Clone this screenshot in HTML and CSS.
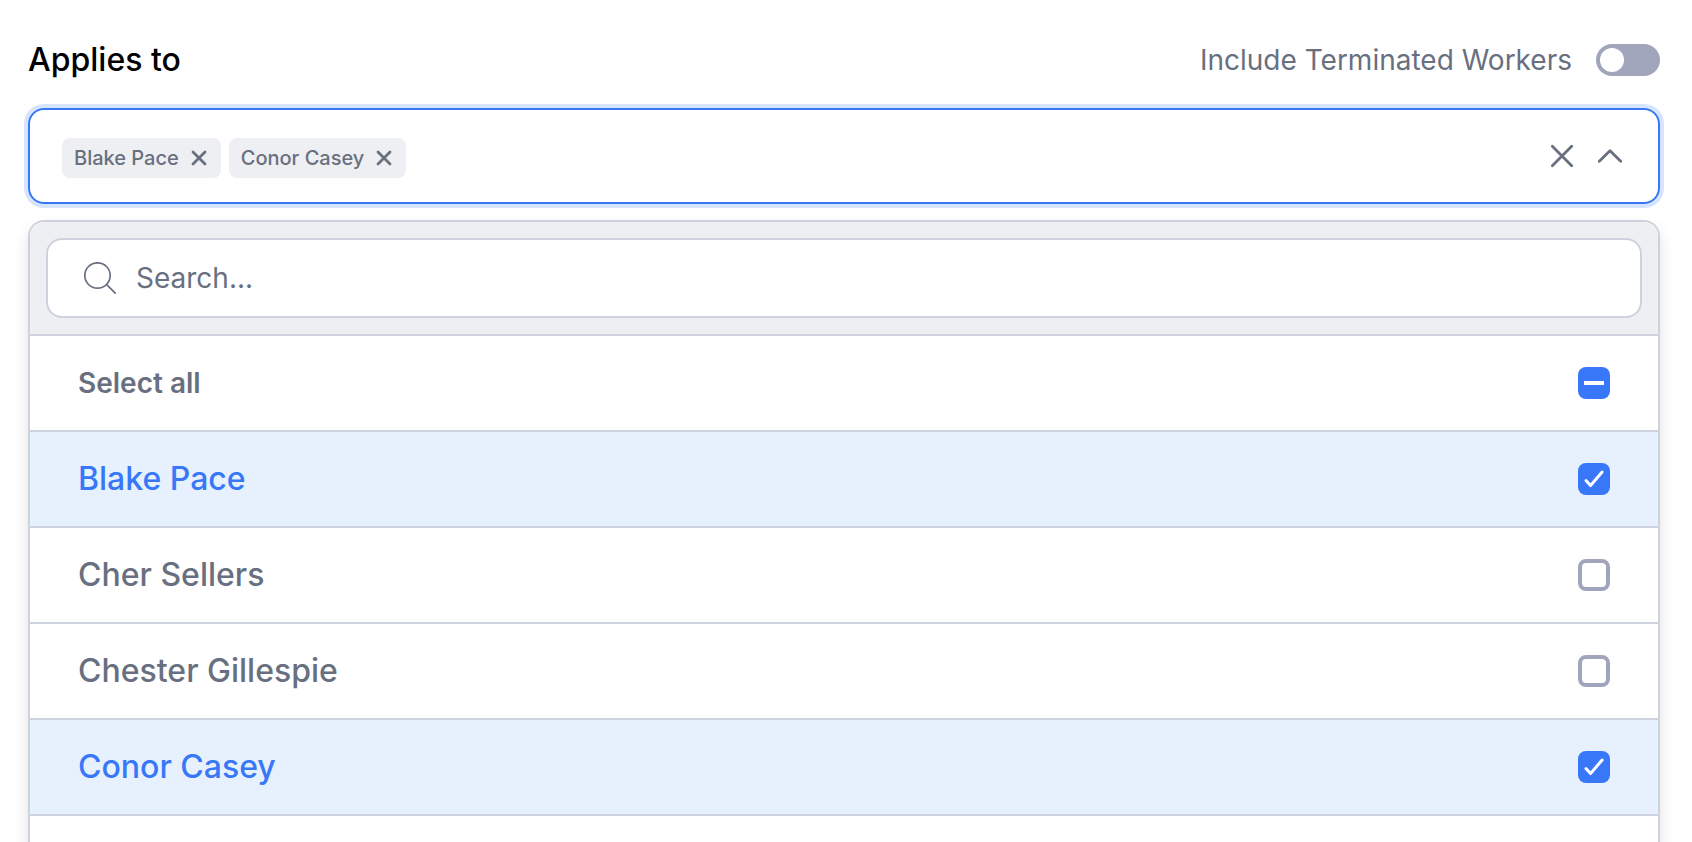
FILE: index.html
```html
<!DOCTYPE html>
<html lang="en">
  <head>
    <meta charset="UTF-8" />
    <meta name="viewport" content="width=device-width, initial-scale=1" />
    <title>Applies to</title>
    <link rel="stylesheet" href="styles.css">
  </head>
  <body>
    <main class="picker">
      <div class="picker-head">
        <h1 class="picker-title">Applies to</h1>
        <label class="toggle">
          Include Terminated Workers
          <input type="checkbox" role="switch" class="toggle-input" />
        </label>
      </div>

      <div class="field">
        <ul class="tags">
          <li class="tag">
            Blake Pace
            <button type="button" class="icon-button" aria-label="Remove Blake Pace">
              <svg width="16" height="16" viewBox="0 0 16 16"><path d="M2 2l12 12M14 2L2 14" stroke-width="2.8" /></svg>
            </button>
          </li>
          <li class="tag">
            Conor Casey
            <button type="button" class="icon-button" aria-label="Remove Conor Casey">
              <svg width="16" height="16" viewBox="0 0 16 16"><path d="M2 2l12 12M14 2L2 14" stroke-width="2.8" /></svg>
            </button>
          </li>
        </ul>
        <div class="field-actions">
          <button type="button" class="icon-button" aria-label="Clear selection">
            <svg width="24" height="24" viewBox="0 0 24 24"><path d="M2.3 2.3l19.4 19.4M21.7 2.3L2.3 21.7" stroke-width="2.8" /></svg>
          </button>
          <button type="button" class="icon-button" aria-label="Close list">
            <svg width="24" height="24" viewBox="0 0 24 24"><path d="M1.3 17.2L12 6.7l10.7 10.5" stroke-width="2.8" /></svg>
          </button>
        </div>
      </div>

      <div class="dropdown">
        <div class="search">
          <label class="search-box">
            <svg width="32" height="32" viewBox="0 0 32 32"><circle cx="13.5" cy="13.5" r="12.7" stroke-width="1.7" /><path d="M22.7 22.7l8.5 8.5" stroke-width="1.7" /></svg>
            <input type="text" class="search-input" placeholder="Search..." aria-label="Search" />
          </label>
        </div>
        <div class="options">
          <label class="option option-all">
            Select all
            <input type="checkbox" class="check" id="selectAll" />
          </label>
          <label class="option">
            Blake Pace
            <input type="checkbox" class="check" checked />
          </label>
          <label class="option">
            Cher Sellers
            <input type="checkbox" class="check" />
          </label>
          <label class="option">
            Chester Gillespie
            <input type="checkbox" class="check" />
          </label>
          <label class="option">
            Conor Casey
            <input type="checkbox" class="check" checked />
          </label>
        </div>
      </div>
    </main>

    <script>
      // some workers are selected, but not all of them
      document.getElementById('selectAll').indeterminate = true;
    </script>
  </body>
</html>
```

FILE: styles.css
```css
:root {
  --blue: #3777f8;
  --blue-light: #e7f1fe;
  --text: #687080;
  --border: #ced2de;
  --gray: #a0a5bb;
  --gray-light: #eeeff3;
}

* {
  box-sizing: border-box;
}

body {
  margin: 0;
  background: #fff;
  color: var(--text);
  font-family: Inter, "Liberation Sans", sans-serif;
  font-size: 28px;
}

svg {
  display: block;
  flex: none;
  fill: none;
  stroke: currentColor;
  stroke-linecap: round;
  stroke-linejoin: round;
}

/* the open list runs down to the bottom of the window */
.picker {
  display: flex;
  flex-direction: column;
  height: 100vh;
  padding: 40px 32px 0 28px;
  overflow: hidden;
}

.picker-head {
  display: flex;
  align-items: center;
  justify-content: space-between;
  height: 40px;
  margin-bottom: 28px;
}
.picker-title {
  margin: 0;
  color: #000;
  font-size: 32px;
  font-weight: 500;
  line-height: 38px;
}

.toggle {
  display: flex;
  align-items: center;
  gap: 24px;
}
.toggle-input {
  appearance: none;
  width: 64px;
  height: 32px;
  margin: 0;
  padding: 4px;
  border-radius: 16px;
  background: var(--gray);
}
.toggle-input::before {
  content: "";
  display: block;
  width: 24px;
  height: 24px;
  border-radius: 50%;
  background: #fff;
}
.toggle-input:checked {
  background: var(--blue);
}
.toggle-input:checked::before {
  margin-left: auto;
}

.icon-button {
  padding: 0;
  border: 0;
  background: none;
  color: inherit;
  cursor: pointer;
}

/* selected values */
.field {
  display: flex;
  flex: none;
  align-items: center;
  justify-content: space-between;
  min-height: 96px;
  padding: 0 36px 0 32px;
  border: 2px solid var(--blue);
  border-radius: 16px;
  box-shadow: 0 0 0 4px #d7e4fd;
}
.tags {
  display: flex;
  gap: 8px;
  margin: 0;
  padding: 4px 0 0;
  list-style: none;
}
.tag {
  display: flex;
  align-items: center;
  gap: 12px;
  height: 40px;
  padding: 0 14px 0 12px;
  border-radius: 8px;
  background: var(--gray-light);
  font-size: 20px;
  font-weight: 500;
}
.field-actions {
  display: flex;
  gap: 24px;
}

/* list */
.dropdown {
  flex: 1;
  margin-top: 16px;
  border: 2px solid var(--border);
  border-bottom: 0;
  border-radius: 16px 16px 0 0;
  box-shadow: 0 8px 16px rgba(0, 0, 0, 0.12);
}
.search {
  padding: 16px;
  border-bottom: 2px solid var(--border);
  border-radius: 14px 14px 0 0;
  background: var(--gray-light);
}
.search-box {
  display: flex;
  align-items: center;
  gap: 20px;
  height: 80px;
  padding: 0 36px;
  border: 2px solid var(--border);
  border-radius: 16px;
  background: #fff;
}
.search-input {
  flex: 1;
  min-width: 0;
  padding: 0;
  border: 0;
  outline: 0;
  background: none;
  color: inherit;
  font: inherit;
}
.search-input::placeholder {
  color: inherit;
}

.option {
  display: flex;
  align-items: center;
  justify-content: space-between;
  height: 96px;
  padding: 0 48px;
  border-bottom: 2px solid var(--border);
  font-size: 32px;
  font-weight: 500;
  line-height: 38px;
}
.option-all {
  font-size: 28px;
  font-weight: 600;
}
.option:has(.check:checked) {
  background: var(--blue-light);
  color: var(--blue);
}

.check {
  appearance: none;
  width: 32px;
  height: 32px;
  margin: 0;
  border: 4px solid var(--gray);
  border-radius: 8px;
  background: #fff;
}
.check:checked,
.check:indeterminate {
  border: 0;
  background: var(--blue);
}
.check:checked {
  background-image: url("data:image/svg+xml,%3Csvg xmlns='http://www.w3.org/2000/svg' viewBox='0 0 32 32' fill='none' stroke='%23fff' stroke-width='3' stroke-linecap='round' stroke-linejoin='round'%3E%3Cpath d='M8 17.6l4.5 5L24.1 9'/%3E%3C/svg%3E");
}
.check:indeterminate {
  background-image: url("data:image/svg+xml,%3Csvg xmlns='http://www.w3.org/2000/svg' viewBox='0 0 32 32'%3E%3Cpath d='M6 14h20v4H6z' fill='%23fff'/%3E%3C/svg%3E");
}
```
